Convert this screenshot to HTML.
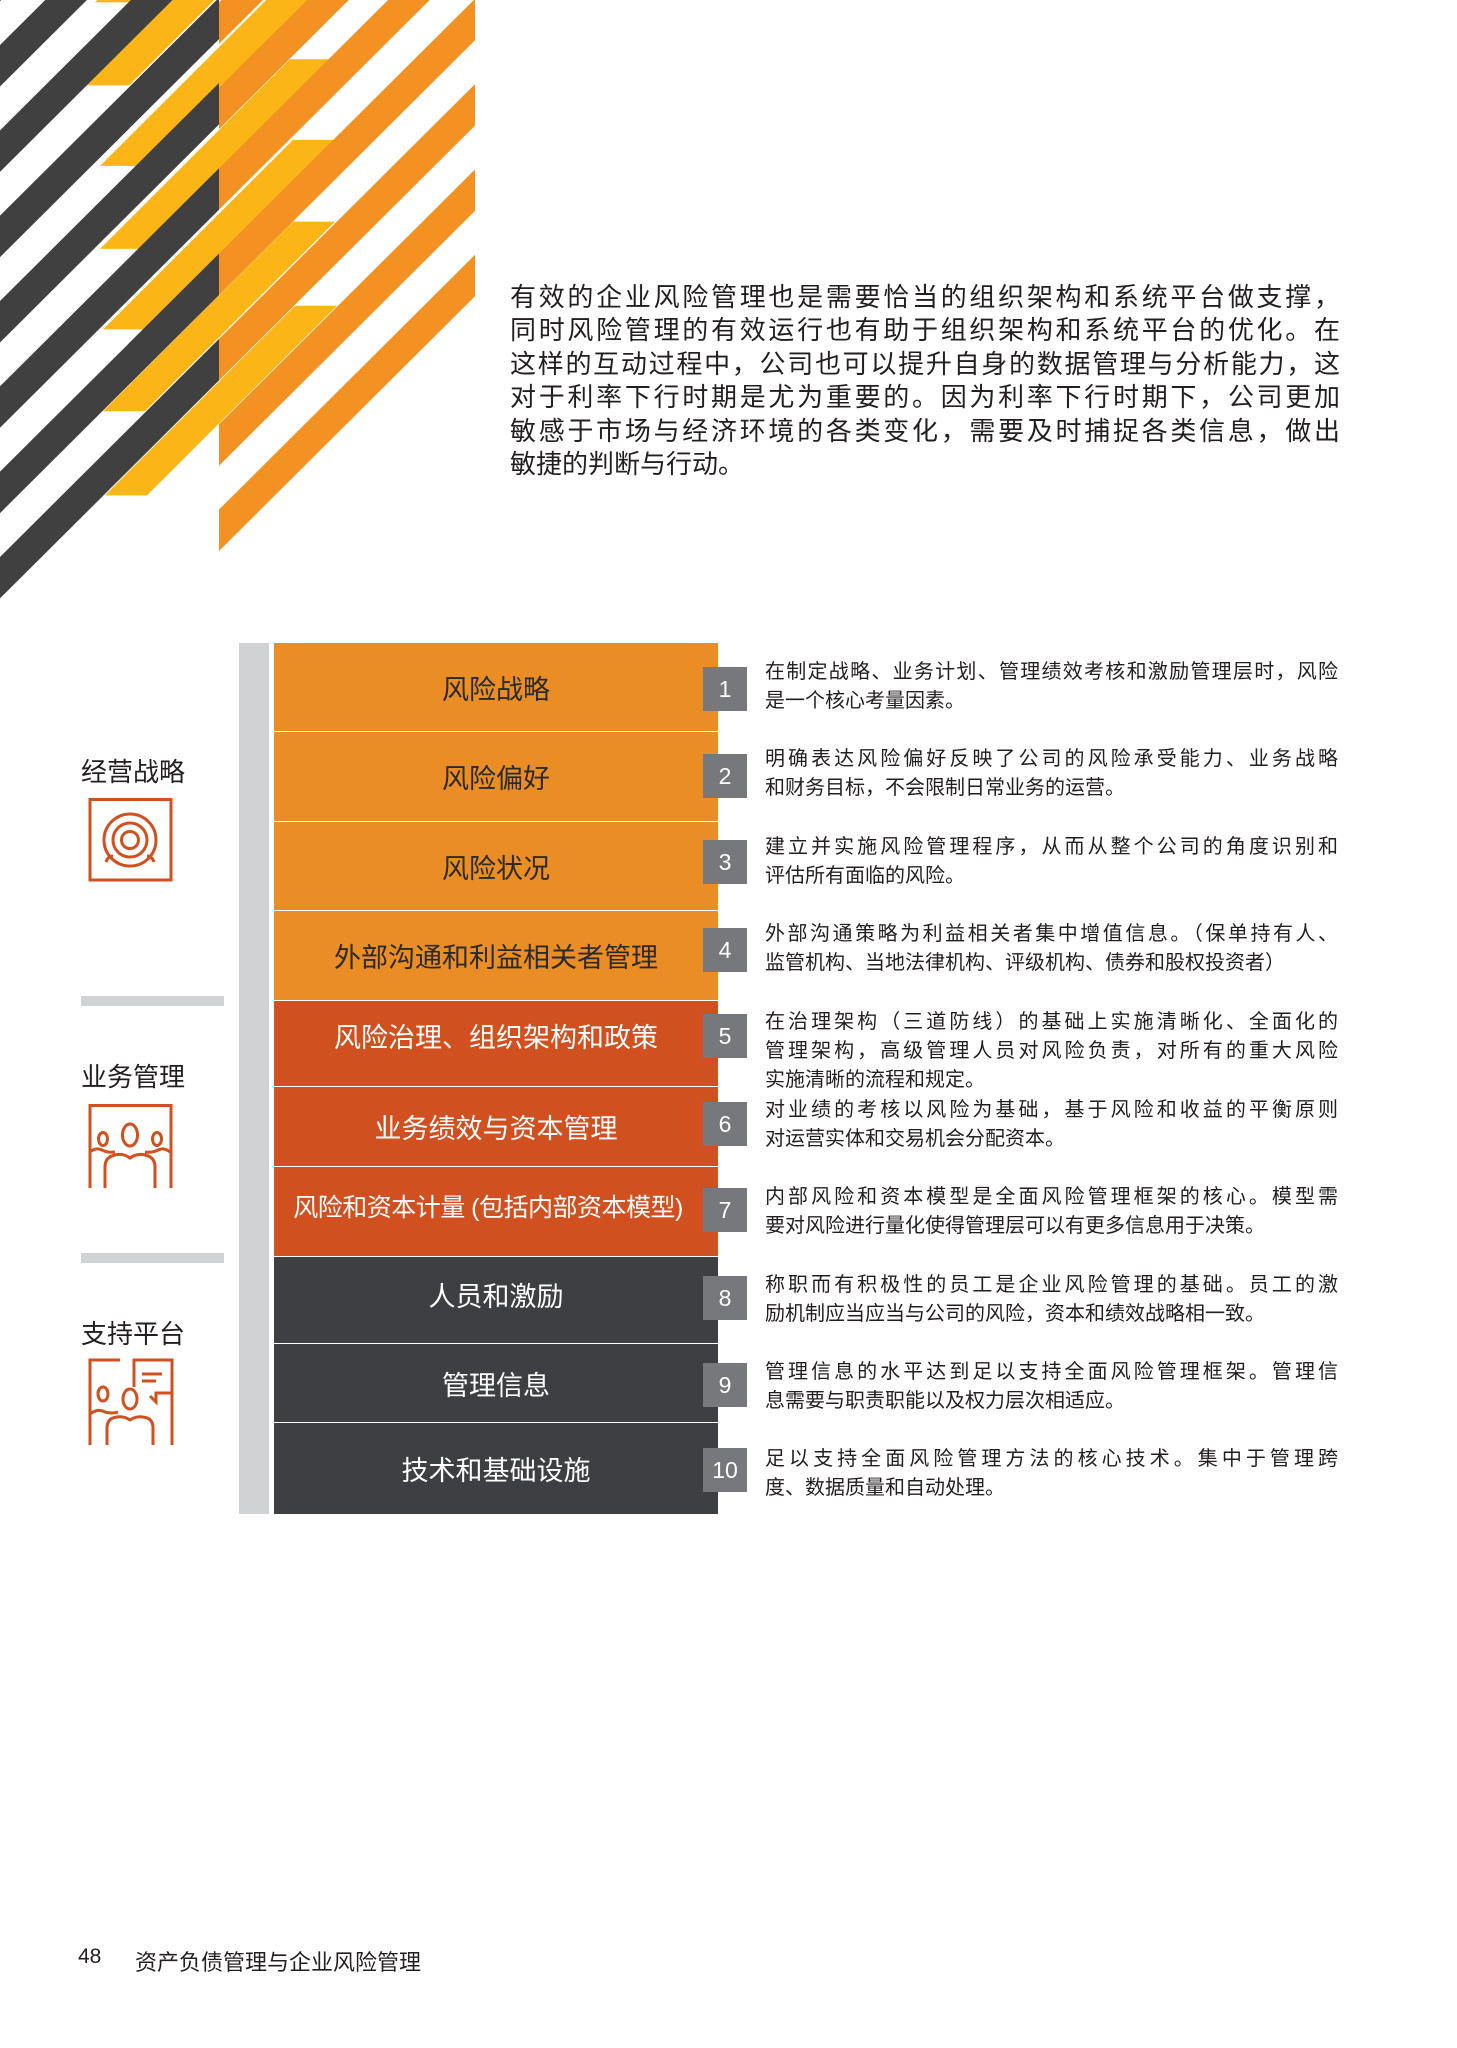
<!DOCTYPE html>
<html><head><meta charset="utf-8">
<style>
*{margin:0;padding:0;box-sizing:border-box}
body{width:1457px;height:2048px;background:#fff;position:relative;overflow:hidden;font-family:"Liberation Sans","Noto Sans CJK SC",sans-serif;color:#231f20}
.abs{position:absolute}
.para{left:510px;top:281px;width:830px;font-size:26px;line-height:33.4px;color:#231f20}
.para div,.desc div.j{text-align:justify;text-align-last:justify;white-space:nowrap}
.para div.l,.desc div.l{text-align:left;text-align-last:left}
.bar{left:239px;top:643px;width:30px;height:871px;background:#d1d2d3}
.blk{left:274px;width:444px;display:flex;align-items:center;justify-content:center;font-size:27px;border-bottom:1.5px solid #fff}
.o{background:#ea8d24;color:#2a2a2a}
.r{background:#d1501f;color:#fff}
.d{background:#3e3f42;color:#fff}
.num{left:703px;width:44px;height:44px;background:#77787b;color:#fff;font-size:23px;display:flex;align-items:center;justify-content:center}
.desc{left:765px;width:573px;font-size:20px;line-height:29px;color:#231f20}
.lab{left:81px;font-size:26px;line-height:30px;color:#231f20}
.sep{left:81px;width:143px;height:10px;background:#d1d2d3}
</style></head><body>

<svg class="abs" style="left:0;top:0" width="480" height="620" viewBox="0 0 480 620">
<g transform="scale(1,1.185)">
<g fill="#fbb516">
<polygon points="95,2 137,2 327,-158 285,-158"/>
<polygon points="87,72 129,72 319,-88 277,-88"/>
<polygon points="100,140 142,140 332,-20 290,-20"/>
<polygon points="100,210 142,210 332,50 290,50"/>
<polygon points="103,278 145,278 335,118 293,118"/>
<polygon points="103,347 145,347 335,187 293,187"/>
<polygon points="105,418 147,418 337,258 295,258"/>
</g>
<g fill="#404041">
<polygon points="0,-34 219,-218 219,-183 0,1"/>
<polygon points="0,38 219,-146 219,-111 0,73"/>
<polygon points="0,110 219,-74 219,-39 0,145"/>
<polygon points="0,182 219,-2 219,33 0,217"/>
<polygon points="0,254 219,70 219,105 0,289"/>
<polygon points="0,326 219,142 219,177 0,361"/>
<polygon points="0,398 219,214 219,249 0,433"/>
<polygon points="0,470 219,286 219,321 0,505"/>
</g>
<g fill="#f39222">
<polygon points="219,-70 475,-285 475,-250 219,-35"/>
<polygon points="219,2 475,-213 475,-178 219,37"/>
<polygon points="219,74 475,-141 475,-106 219,109"/>
<polygon points="219,142 475,-73 475,-38 219,177"/>
<polygon points="219,214 475,-1 475,34 219,249"/>
<polygon points="219,286 475,71 475,106 219,321"/>
<polygon points="219,358 475,143 475,178 219,393"/>
<polygon points="219,430 475,215 475,250 219,465"/>
</g>
</g>
</svg>

<div class="abs para">
<div>有效的企业风险管理也是需要恰当的组织架构和系统平台做支撑，</div>
<div>同时风险管理的有效运行也有助于组织架构和系统平台的优化。在</div>
<div>这样的互动过程中，公司也可以提升自身的数据管理与分析能力，这</div>
<div>对于利率下行时期是尤为重要的。因为利率下行时期下，公司更加</div>
<div>敏感于市场与经济环境的各类变化，需要及时捕捉各类信息，做出</div>
<div class="l">敏捷的判断与行动。</div>
</div>

<div class="abs bar"></div>

<div class="abs blk o" style="top:643px;height:89px">风险战略</div>
<div class="abs blk o" style="top:732px;height:90px">风险偏好</div>
<div class="abs blk o" style="top:822px;height:89px">风险状况</div>
<div class="abs blk o" style="top:911px;height:90px">外部沟通和利益相关者管理</div>
<div class="abs blk r" style="top:1001px;height:86px;padding-bottom:16px">风险治理、组织架构和政策</div>
<div class="abs blk r" style="top:1087px;height:80px">业务绩效与资本管理</div>
<div class="abs blk r" style="top:1167px;height:90px;padding-bottom:12px;padding-right:16px;font-size:25px;letter-spacing:-0.5px">风险和资本计量 (包括内部资本模型)</div>
<div class="abs blk d" style="top:1257px;height:87px;padding-bottom:12px">人员和激励</div>
<div class="abs blk d" style="top:1344px;height:79px">管理信息</div>
<div class="abs blk d" style="top:1423px;height:91px;border-bottom:none">技术和基础设施</div>

<div class="abs num" style="top:667px">1</div>
<div class="abs num" style="top:754px">2</div>
<div class="abs num" style="top:840px">3</div>
<div class="abs num" style="top:928px">4</div>
<div class="abs num" style="top:1014px">5</div>
<div class="abs num" style="top:1102px">6</div>
<div class="abs num" style="top:1188px">7</div>
<div class="abs num" style="top:1276px">8</div>
<div class="abs num" style="top:1363px">9</div>
<div class="abs num" style="top:1448px">10</div>

<div class="abs desc" style="top:658px"><div class="j">在制定战略、业务计划、管理绩效考核和激励管理层时，风险</div><div class="l">是一个核心考量因素。</div></div>
<div class="abs desc" style="top:745px"><div class="j">明确表达风险偏好反映了公司的风险承受能力、业务战略</div><div class="l">和财务目标，不会限制日常业务的运营。</div></div>
<div class="abs desc" style="top:833px"><div class="j">建立并实施风险管理程序，从而从整个公司的角度识别和</div><div class="l">评估所有面临的风险。</div></div>
<div class="abs desc" style="top:920px"><div class="j">外部沟通策略为利益相关者集中增值信息。（保单持有人、</div><div class="l">监管机构、当地法律机构、评级机构、债券和股权投资者）</div></div>
<div class="abs desc" style="top:1008px"><div class="j">在治理架构（三道防线）的基础上实施清晰化、全面化的</div><div class="j">管理架构，高级管理人员对风险负责，对所有的重大风险</div><div class="l">实施清晰的流程和规定。</div></div>
<div class="abs desc" style="top:1096px"><div class="j">对业绩的考核以风险为基础，基于风险和收益的平衡原则</div><div class="l">对运营实体和交易机会分配资本。</div></div>
<div class="abs desc" style="top:1183px"><div class="j">内部风险和资本模型是全面风险管理框架的核心。模型需</div><div class="l">要对风险进行量化使得管理层可以有更多信息用于决策。</div></div>
<div class="abs desc" style="top:1271px"><div class="j">称职而有积极性的员工是企业风险管理的基础。员工的激</div><div class="l">励机制应当应当与公司的风险，资本和绩效战略相一致。</div></div>
<div class="abs desc" style="top:1358px"><div class="j">管理信息的水平达到足以支持全面风险管理框架。管理信</div><div class="l">息需要与职责职能以及权力层次相适应。</div></div>
<div class="abs desc" style="top:1445px"><div class="j">足以支持全面风险管理方法的核心技术。集中于管理跨</div><div class="l">度、数据质量和自动处理。</div></div>

<div class="abs lab" style="top:757px">经营战略</div>
<svg class="abs" style="left:80px;top:790px" width="100" height="100" viewBox="0 0 100 100" fill="none" stroke="#d1501f" stroke-width="3">
<rect x="10" y="9.5" width="81" height="80.5"/>
<circle cx="50" cy="50" r="26"/>
<circle cx="50" cy="50" r="17"/>
<circle cx="50" cy="50" r="8.5"/>
<path d="M26,72 Q28,66 33,66 M74,72 Q72,66 67,66"/>
</svg>
<div class="abs sep" style="top:996px"></div>

<div class="abs lab" style="top:1062px">业务管理</div>
<svg class="abs" style="left:80px;top:1095px" width="100" height="100" viewBox="0 0 100 100" fill="none" stroke="#d1501f" stroke-width="3">
<path d="M10,93 V10.5 H91 V93"/>
<ellipse cx="50" cy="40" rx="7.5" ry="11"/>
<ellipse cx="23" cy="44" rx="4.5" ry="6.5"/>
<ellipse cx="77" cy="44" rx="4.5" ry="6.5"/>
<path d="M25,93 V72 Q25,62 35,60 Q43,58 50,63 Q57,58 65,60 Q75,62 75,72 V93"/>
<path d="M10,57 Q16,52 22,55 Q28,58 35,57 M90,57 Q84,52 78,55 Q72,58 65,57"/>
</svg>
<div class="abs sep" style="top:1253px"></div>

<div class="abs lab" style="top:1319px">支持平台</div>
<svg class="abs" style="left:80px;top:1352px" width="100" height="100" viewBox="0 0 100 100" fill="none" stroke="#d1501f" stroke-width="3">
<path d="M40,8 H10 V93"/>
<path d="M54,35 V8 H92 V93"/>
<path d="M62,22 H82 M62,29 H76"/>
<path d="M70,44 L76,50 V41 H92"/>
<ellipse cx="23" cy="42" rx="5" ry="7"/>
<ellipse cx="50" cy="47" rx="7" ry="10"/>
<path d="M10,62 Q18,56 25,60 Q32,62 38,60"/>
<path d="M27,93 V76 Q27,66 37,65 Q44,64 50,68 Q56,64 63,65 Q73,66 73,76 V93"/>
</svg>

<div class="abs" style="left:78px;top:1945px;font-size:21px;color:#231f20">48</div>
<div class="abs" style="left:135px;top:1945px;font-size:22px;color:#231f20">资产负债管理与企业风险管理</div>
</body></html>
